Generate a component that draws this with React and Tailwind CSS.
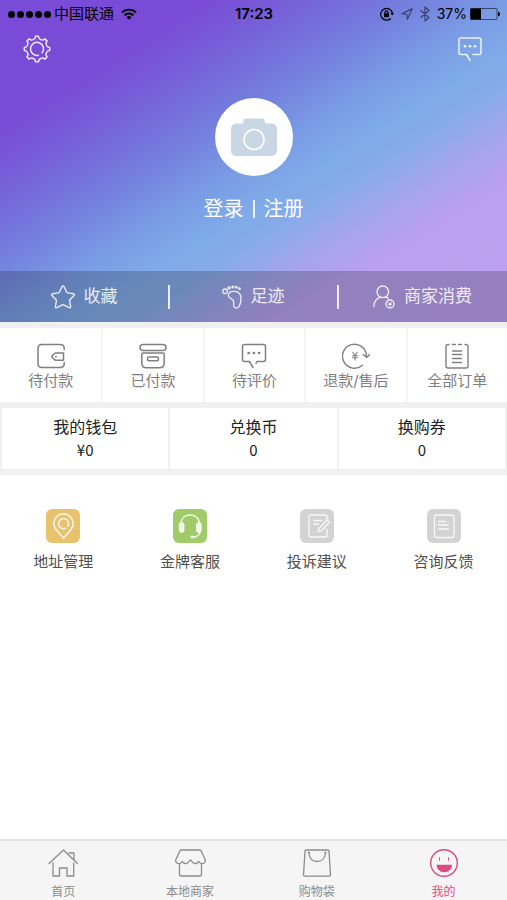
import React from "react";

const line = {
  fill: "none",
  stroke: "currentColor",
  strokeLinecap: "round",
  strokeLinejoin: "round",
};

function gearPath(teeth, outer, inner, c) {
  const step = (Math.PI * 2) / teeth;
  const at = (i, f, r) => {
    const a = -Math.PI / 2 + (i + f) * step;
    return `${(c + r * Math.cos(a)).toFixed(2)} ${(c + r * Math.sin(a)).toFixed(2)}`;
  };
  let d = `M${at(0, -0.16, outer)}`;
  for (let i = 0; i < teeth; i++) {
    d += `L${at(i, 0.16, outer)}L${at(i, 0.23, inner + 0.6)}Q${at(i, 0.5, inner - 0.9)} ${at(i, 0.77, inner + 0.6)}L${at(i, 0.84, outer)}`;
  }
  return `${d}Z`;
}

const GearIcon = () => (
  <svg className="size-7" viewBox="0 0 28 28" {...line} strokeWidth="1.500" aria-hidden="true">
    <path d={gearPath(8, 12.8, 10.4, 14)} />
    <path d="M15.500 20.200A6.500 6.500 0 1 1 19.200 17.800" />
  </svg>
);

const MessageIcon = () => (
  <svg className="size-7" viewBox="0 0 28 28" {...line} strokeWidth="1.500" aria-hidden="true">
    <path d="M10.500 19.500H5a2 2 0 0 1-2-2V5a2 2 0 0 1 2-2h18a2 2 0 0 1 2 2v12.500a2 2 0 0 1-2 2h-6M10.500 19.500l3.500 6" />
    <path d="M8.800 11.300h.4M13.800 11.300h.4M18.800 11.300h.4" strokeWidth="2.600" />
  </svg>
);

const CameraIcon = () => (
  <svg className="h-10 w-12" viewBox="0 0 48 40" aria-hidden="true">
    <path fill="#c9d6e4" d="M15.500 1.500h17q1.500 0 2 1.500l.8 3.500H41q6 0 6 6V33q0 6-6 6H7q-6 0-6-6V12.500q0-6 6-6h5.700l.8-3.500q.5-1.500 2-1.500Z" />
    <circle cx="24" cy="22.500" r="10" fill="none" stroke="#fff" strokeWidth="1.600" />
  </svg>
);

const StarIcon = () => (
  <svg className="size-6" viewBox="0 0 24 24" {...line} strokeWidth="1.400" aria-hidden="true">
    <path d="M11 1.600q1-1.400 2 0l2.700 5.600q.3.600 1 .7l5.700.9q1.500.4.600 1.600l-4.100 4.300q-.4.500-.3 1.100l1 5.900q0 1.600-1.500 1l-5.400-2.800q-.7-.3-1.400 0l-5.400 2.800q-1.500.6-1.500-1l1-5.900q.1-.6-.3-1.100L1 10.400q-.9-1.200.6-1.600l5.700-.9q.7-.1 1-.7Z" />
  </svg>
);

const FootIcon = () => (
  <svg className="h-6 w-5" viewBox="0 0 20 24" {...line} strokeWidth="1.300" aria-hidden="true">
    <path d="M6.300 10.200c.4-3 3.400-4.200 6.700-3.800 3.800.5 6.200 3.300 6 7.600-.2 3.600-1 6.200-2.300 7.800-1.500 1.800-4.200 1.500-4.900-.6-.6-1.800.1-3-.1-4.500-.3-2.300-1.600-2.400-3.200-3.300-1.500-.8-2.400-1.600-2.200-3.200Z" />
    <circle cx="3" cy="6.300" r="2.300" />
    <circle cx="7" cy="3" r="1.100" />
    <circle cx="10.800" cy="2" r=".9" />
    <circle cx="14.300" cy="2.200" r=".8" />
    <circle cx="17.500" cy="3.700" r=".7" />
  </svg>
);

const MemberIcon = () => (
  <svg className="h-6 w-[22px]" viewBox="0 0 22 24" {...line} strokeWidth="1.400" aria-hidden="true">
    <circle cx="9.800" cy="6.800" r="5.800" />
    <path d="M.8 21.500c.2-4.500 2.300-7.800 6.200-9.200M12.800 12.200c.9.300 1.600.7 2.300 1.200" />
    <circle cx="17" cy="19" r="4" />
    <path d="M15.300 17.300l1.700 1.800 1.700-1.800M15.300 19.300h3.400M17 19.300v2" strokeWidth="1" />
  </svg>
);

const WalletIcon = () => (
  <svg className="h-[26px] w-7" viewBox="0 0 28 26" {...line} strokeWidth="1.500" aria-hidden="true">
    <path d="M27.200 6.500V5.500q0-4-4-4H5q-4 0-4 4v15q0 4 4 4h18.200q4 0 4-4v-1" />
    <path d="M26.500 10h-7.500q-1 0-1.700.7l-2.200 2.200q-.7.700 0 1.400l2.200 2.200q.7.700 1.700.7h7.500Z" />
    <path d="M18.800 13.600h.2" strokeWidth="1.800" />
  </svg>
);

const BoxIcon = () => (
  <svg className="h-[26px] w-7" viewBox="0 0 28 26" {...line} strokeWidth="1.500" aria-hidden="true">
    <rect x="1" y="1.500" width="26" height="6" rx="3" />
    <path d="M4 10h20q1.200 0 1.200 1.200V20q0 4.800-4.800 4.800H7.600q-4.800 0-4.800-4.800v-8.800Q2.800 10 4 10Z" />
    <rect x="8.500" y="14" width="11" height="3.800" rx="1.500" />
  </svg>
);

const ReviewIcon = () => (
  <svg className="h-[26px] w-7" viewBox="0 0 28 26" {...line} strokeWidth="1.500" aria-hidden="true">
    <path d="M9.500 18.500H4.500a2 2 0 0 1-2-2v-13a2 2 0 0 1 2-2h19a2 2 0 0 1 2 2v13a2 2 0 0 1-2 2H17l-1 2M9.500 18.500l3.500 6" />
    <path d="M8.500 10h.3M13.800 10h.3M19 10h.3" strokeWidth="2.400" />
  </svg>
);

const RefundIcon = () => (
  <svg className="h-[26px] w-7" viewBox="0 0 28 26" {...line} strokeWidth="1.400" aria-hidden="true">
    <path d="M20.500 22.200A12 12 0 1 1 24.500 13" />
    <path d="M21.200 11.500l3.500 3 3-3" />
    <path d="M10.800 9.300l2.200 3.200 2.200-3.200M10.500 12.700h5M10.500 14.700h5M13 12.500v4.500" strokeWidth="1.100" />
  </svg>
);

const OrdersIcon = () => (
  <svg className="h-[26px] w-6" viewBox="0 0 24 26" {...line} strokeWidth="1.400" aria-hidden="true">
    <path d="M4 1.500H3a2 2 0 0 0-2 2V23a2 2 0 0 0 2 2h18a2 2 0 0 0 2-2V3.500a2 2 0 0 0-2-2h-1M7.500 1.500h3M13.500 1.500h3" />
    <path d="M7.500 8h9M7.500 11.500h9M7.500 15.500h9M7.500 19.500h9" />
  </svg>
);

const PinIcon = () => (
  <svg className="size-[34px]" viewBox="0 0 34 34" {...line} strokeWidth="1.500" aria-hidden="true">
    <path d="M17.500 29C12 23 7.800 19.500 7.800 14.500a9.700 9.700 0 0 1 19.400 0C27.200 19.500 23 23 17.500 29Z" />
    <path d="M19.500 19.200a5 5 0 1 1 2.300-2" />
  </svg>
);

const HeadsetIcon = () => (
  <svg className="size-[34px]" viewBox="0 0 34 34" {...line} strokeWidth="1.400" aria-hidden="true">
    <path d="M8 15C8 9 12 6 17 6s9.500 3 9.500 9M27 22c0 3.500-2 5.500-6 6" />
    <rect x="6.500" y="14" width="4.200" height="9" rx="1.800" fill="currentColor" />
    <rect x="23.800" y="14" width="4.200" height="9" rx="1.800" fill="currentColor" />
    <path d="M18.700 28h2.300" strokeWidth="2.600" />
  </svg>
);

const ComplaintIcon = () => (
  <svg className="size-[34px]" viewBox="0 0 34 34" {...line} strokeWidth="1.300" aria-hidden="true">
    <path d="M27 20v6a2 2 0 0 1-2 2H11a2 2 0 0 1-2-2V8a2 2 0 0 1 2-2h14a2 2 0 0 1 2 2v2" />
    <path d="M14 11.500h8M14 15h4.500" />
    <path d="M19 19.500l8-8.500 2.500 2.200-8 8.500-3.200 1Z" />
  </svg>
);

const FeedbackIcon = () => (
  <svg className="size-[34px]" viewBox="0 0 34 34" {...line} strokeWidth="1.300" aria-hidden="true">
    <rect x="7.500" y="6" width="19.500" height="22.500" rx="2" />
    <path d="M11.500 12.500h7M11.500 16h10M11.500 20h10" />
  </svg>
);

const HomeIcon = () => (
  <svg className="size-[30px]" viewBox="0 0 30 30" {...line} strokeWidth="1.300" aria-hidden="true">
    <path d="M1 15.500L15.500 2l14 13.500M21 5H26v6.500" />
    <path d="M5 15v13h6.500v-8h7.500v8h6.700V15" />
  </svg>
);

const ShopIcon = () => (
  <svg className="h-[30px] w-8" viewBox="0 0 32 30" {...line} strokeWidth="1.300" aria-hidden="true">
    <path d="M7.500 2h18q1.200 0 1.700 1l4 8.800c.8 2.700-2.200 4.800-4.700 3.400q-1-.6-1.700-1.700-2.500 3.500-5.800 1-.8-.6-1.500-1.700l-1-.8-1 .8q-.7 1.100-1.500 1.700-3.300 2.500-5.800-1-.7 1.100-1.700 1.700c-2.500 1.400-5.500-.7-4.700-3.400L5.800 3q.5-1 1.700-1Z" />
    <path d="M5.500 16v10q0 2 2 2h18q2 0 2-2V16" />
  </svg>
);

const BagIcon = () => (
  <svg className="size-[30px]" viewBox="0 0 30 30" {...line} strokeWidth="1.300" aria-hidden="true">
    <path d="M4 2h22q1 0 1 1l1.500 24q0 1.200-1.200 1.200H2.700q-1.200 0-1.200-1.200L3 3q0-1 1-1Z" />
    <path d="M7 5.200C7.500 10.500 10.500 13.500 15 13.500s8-3 8.500-8.300M6.300 4.500h1.200M22.800 4.500h1.200" />
  </svg>
);

const SmileIcon = () => (
  <svg className="size-[30px]" viewBox="0 0 30 30" {...line} strokeWidth="1.400" aria-hidden="true">
    <circle cx="15" cy="15" r="13.300" />
    <path d="M10.500 9.500v3M19.500 9.500v3" strokeWidth=".9" />
    <path d="M7.500 16.800h15.500c-.2 4.300-3.200 7.500-7.700 7.500S7.700 21.100 7.500 16.800Z" fill="currentColor" stroke="none" />
  </svg>
);

const WifiIcon = () => (
  <svg className="h-3 w-4" viewBox="0 0 16 12" fill="none" stroke="currentColor" strokeWidth="1.900" aria-hidden="true">
    <path d="M1 4.500a10 10 0 0 1 14 0M3.500 7.300a6.400 6.400 0 0 1 9 0" />
    <path d="M8 11.800L5.500 9.200a3.600 3.600 0 0 1 5 0Z" fill="currentColor" stroke="none" />
  </svg>
);

const LockIcon = () => (
  <svg className="size-[14px]" viewBox="0 0 14 14" fill="none" stroke="currentColor" strokeWidth="1.200" aria-hidden="true">
    <path d="M10.800 11.500A5.900 5.900 0 1 1 12.400 6" />
    <path d="M10.500 6h3.500l-1.700 2.500Z" fill="currentColor" stroke="none" />
    <rect x="4" y="6.300" width="5" height="3.900" fill="currentColor" stroke="none" />
    <path d="M5 6.500V5.300a1.500 1.500 0 0 1 3 0v1.200" />
  </svg>
);

const LocationIcon = () => (
  <svg className="size-3" viewBox="0 0 12 12" {...line} strokeWidth="1.100" aria-hidden="true">
    <path d="M11.200.8L.8 5.800l5 .4.500 5Z" />
  </svg>
);

const BluetoothIcon = () => (
  <svg className="h-4 w-[10px]" viewBox="0 0 10 16" {...line} strokeWidth="1.100" aria-hidden="true">
    <path d="M.8 4.500l8.200 7L5 15.200V.8l4 3.700-8.200 7" />
  </svg>
);

const BatteryIcon = () => (
  <svg className="h-3 w-[30px]" viewBox="0 0 30 12" aria-hidden="true">
    <rect x=".5" y=".5" width="26.500" height="11" rx="1" fill="none" stroke="currentColor" strokeOpacity=".55" />
    <rect x=".5" y=".5" width="10.500" height="11" fill="currentColor" />
    <path d="M28 3.500q2 .5 2 2.500t-2 2.500Z" fill="currentColor" />
  </svg>
);

const shortcuts = [
  { label: "收藏", Icon: StarIcon },
  { label: "足迹", Icon: FootIcon },
  { label: "商家消费", Icon: MemberIcon },
];

const orders = [
  { label: "待付款", Icon: WalletIcon },
  { label: "已付款", Icon: BoxIcon },
  { label: "待评价", Icon: ReviewIcon },
  { label: "退款/售后", Icon: RefundIcon },
  { label: "全部订单", Icon: OrdersIcon },
];

const assets = [
  { label: "我的钱包", value: "¥0" },
  { label: "兑换币", value: "0" },
  { label: "换购券", value: "0" },
];

const services = [
  { label: "地址管理", Icon: PinIcon, tile: "bg-[#e8c26c]" },
  { label: "金牌客服", Icon: HeadsetIcon, tile: "bg-[#9fcc68]" },
  { label: "投诉建议", Icon: ComplaintIcon, tile: "bg-[#d3d3d3]" },
  { label: "咨询反馈", Icon: FeedbackIcon, tile: "bg-[#d3d3d3]" },
];

const tabs = [
  { label: "首页", Icon: HomeIcon },
  { label: "本地商家", Icon: ShopIcon },
  { label: "购物袋", Icon: BagIcon },
  { label: "我的", Icon: SmileIcon, active: true },
];

function StatusBar() {
  return (
    <div className="grid h-7 grid-cols-[1fr_auto_1fr] items-center pr-[7px] pl-2 text-[15px] text-black">
      <div className="flex items-center gap-[3px]">
        <div className="flex gap-[2px]">
          {[0, 1, 2, 3, 4].map((n) => (
            <span key={n} className="size-[7px] rounded-full bg-black" />
          ))}
        </div>
        <span>中国联通</span>
        <span className="pl-1">
          <WifiIcon />
        </span>
      </div>
      <span className="font-semibold">17:23</span>
      <div className="flex items-center justify-end gap-[7px]">
        <LockIcon />
        <span className="flex items-center gap-[7px] text-black/55">
          <LocationIcon />
          <BluetoothIcon />
        </span>
        <span className="flex items-center gap-[3px] text-sm">
          37%
          <BatteryIcon />
        </span>
      </div>
    </div>
  );
}

export default function App() {
  return (
    <div className="flex min-h-screen flex-col bg-white font-[Inter,'Noto_Sans_CJK_SC',sans-serif]">
      <header className="bg-[linear-gradient(148deg,#7a4bd6_20%,#7662d9_30%,#7480de_41%,#7a9ce5_50%,#7faae8_57%,#87abe9_63%,#a3a5ec_70%,#b9a0ee_77%,#bea0f0_100%)]">
        <StatusBar />
        <div className="flex h-[42px] items-center justify-between px-[23px] text-white/85">
          <button type="button" aria-label="设置">
            <GearIcon />
          </button>
          <button type="button" aria-label="消息">
            <MessageIcon />
          </button>
        </div>
        <div className="flex flex-col items-center pt-7 pb-12">
          <button
            type="button"
            aria-label="头像"
            className="flex size-[78px] items-center justify-center rounded-full bg-white"
          >
            <CameraIcon />
          </button>
          <div className="mt-[19px] flex items-center gap-[9px] text-xl text-white">
            <a href="#login">登录</a>
            <span className="h-[18px] w-[2px] bg-white/85" />
            <a href="#register">注册</a>
          </div>
        </div>
        <nav className="grid h-[51px] grid-cols-3 bg-black/20 text-[17px] text-white/85">
          {shortcuts.map(({ label, Icon }, i) => (
            <div key={label} className="flex items-center">
              <a href="#shortcut" className="flex flex-1 items-center justify-center gap-[9px]">
                <Icon />
                {label}
              </a>
              {i < 2 && <span className="-mr-px h-6 w-[2px] bg-white/85" />}
            </div>
          ))}
        </nav>
      </header>

      <main>
        <section className="grid grid-cols-5 border-t-6 border-[#f0f0f0] text-[15px] text-[#808080]">
          {orders.map(({ label, Icon }) => (
            <a
              key={label}
              href="#orders"
              className="flex flex-col items-center border-l-2 border-[#f5f5f5] pt-[15px] pb-[10px] first:border-l-0"
            >
              <Icon />
              <span className="mt-px leading-[22px]">{label}</span>
            </a>
          ))}
        </section>

        <section className="grid grid-cols-3 gap-[2px] border-x-2 border-y-6 border-[#f0f0f0] bg-[#f0f0f0] text-[#222]">
          {assets.map(({ label, value }) => (
            <a key={label} href="#assets" className="flex flex-col items-center bg-white pt-[7px] pb-2">
              <span className="text-base leading-6">{label}</span>
              <span className="font-['Noto_Sans_CJK_SC',sans-serif] text-[15px] leading-[22px]">{value}</span>
            </a>
          ))}
        </section>

        <section className="grid grid-cols-4 pt-[34px] text-[15px] text-[#505050]">
          {services.map(({ label, Icon, tile }) => (
            <a key={label} href="#service" className="flex flex-col items-center gap-2">
              <span className={`rounded-md text-white/85 ${tile}`}>
                <Icon />
              </span>
              <span className="leading-[22px]">{label}</span>
            </a>
          ))}
        </section>
      </main>

      <nav className="mt-auto grid grid-cols-4 border-t-2 border-[#e2e2e2] bg-[#f5f5f5] pt-[7px] text-xs text-[#8c8c8c]">
        {tabs.map(({ label, Icon, active }) => (
          <a
            key={label}
            href="#tab"
            aria-current={active ? "page" : undefined}
            className={`flex flex-col items-center gap-[6px] ${active ? "text-[#dd4a82]" : ""}`}
          >
            <Icon />
            <span className="leading-4">{label}</span>
          </a>
        ))}
      </nav>
    </div>
  );
}
